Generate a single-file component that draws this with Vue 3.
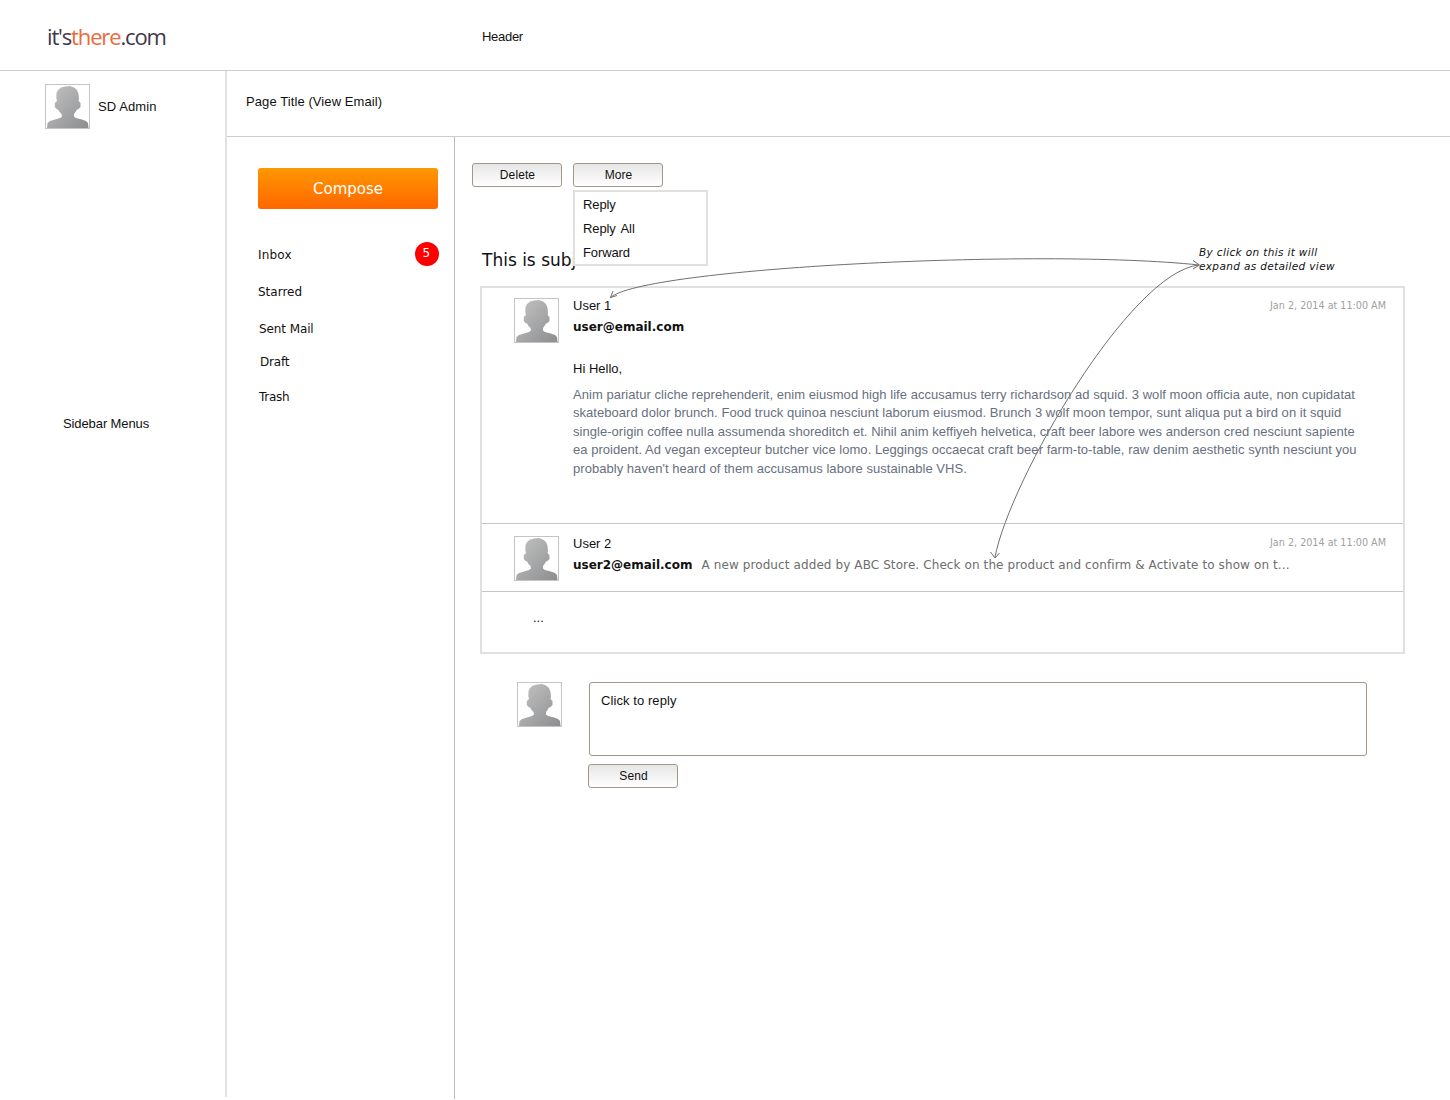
<template>
  <div class="page">
    <header class="top-bar">
      <div class="logo"><span class="logo-dark">it's</span><span class="logo-orange">there</span><span class="logo-dark">.com</span></div>
      <div class="header-label">Header</div>
    </header>

    <div class="body-row">
      <aside class="sidebar">
        <div class="profile">
          <svg class="avatar" viewBox="0 0 45 45"><use href="#person" /></svg>
          <span>SD Admin</span>
        </div>
        <div class="sidebar-label">Sidebar Menus</div>
      </aside>

      <main class="main">
        <div class="page-title">Page Title (View Email)</div>
        <div class="columns">
          <nav class="mail-nav">
            <button class="compose">Compose</button>
            <ul class="folders">
              <li v-for="f in folders" :key="f.name" :class="f.cls">
                <span class="folder-name">{{ f.name }}</span>
                <span v-if="f.count" class="count">{{ f.count }}</span>
              </li>
            </ul>
          </nav>

          <section class="content">
            <div class="actions">
              <button class="btn">Delete</button>
              <button class="btn">More</button>
              <ul class="menu">
                <li v-for="m in moreItems" :key="m">{{ m }}</li>
              </ul>
            </div>

            <h2 class="subject">This is subject</h2>

            <div class="thread">
              <article class="mail mail-open">
                <svg class="avatar" viewBox="0 0 45 45"><use href="#person" /></svg>
                <div class="mail-body">
                  <div class="user">User 1</div>
                  <div class="address">user@email.com</div>
                  <p class="greeting">Hi Hello,</p>
                  <p class="text">{{ bodyText }}</p>
                </div>
                <time class="date">Jan 2, 2014 at 11:00 AM</time>
              </article>
              <article class="mail mail-short">
                <svg class="avatar" viewBox="0 0 45 45"><use href="#person" /></svg>
                <div class="mail-body">
                  <div class="user">User 2</div>
                  <div class="address-row">
                    <span class="address">user2@email.com</span>
                    <span class="snippet">A new product added by ABC Store. Check on the product and confirm &amp; Activate to show on t...</span>
                  </div>
                </div>
                <time class="date">Jan 2, 2014 at 11:00 AM</time>
              </article>
              <div class="more-mails">...</div>
            </div>

            <div class="reply">
              <svg class="avatar" viewBox="0 0 45 45"><use href="#person" /></svg>
              <div class="reply-col">
                <div class="reply-box">Click to reply</div>
                <button class="btn send">Send</button>
              </div>
            </div>
          </section>
        </div>
      </main>
    </div>

    <!-- annotation arrows lie over the page -->
    <svg class="arrows" width="1450" height="1100" viewBox="0 0 1450 1100">
      <defs>
        <linearGradient id="personFill" x1="0" y1="0" x2="1" y2="1">
          <stop offset="0" stop-color="#c4c4c4" />
          <stop offset="1" stop-color="#8c8d8f" />
        </linearGradient>
        <symbol id="person" viewBox="0 0 45 45">
          <rect x="0.5" y="0.5" width="44" height="44" fill="#fff" stroke="#c4c4c4" />
          <path fill="url(#personFill)" d="M20 2.500L25 2L29 3.500L32 6L33.500 10L34 15L33.500 17L35.500 19L35.500 23L33.500 25L32 25.500L30.500 28L29 30L29 32.500L31 34L37 35.500L41 37L43 39L43.500 44L2 44L2.500 39L5 37L10 35.500L15 34L17 32.500L16.500 30L14.500 28L13 25.500L11.500 25L9.800 23L9.800 19L12 17L11.300 14L11.500 9L13 6L16 3.500Z" />
        </symbol>
      </defs>
      <g fill="none" stroke="#6f6f6f" stroke-width="1">
        <path d="M610 298C640 268 1040 248 1199 265" />
        <path d="M617 295.500L610.500 297.500L613 291" />
        <path d="M1199 265C1130 272 1010 480 995 557" />
        <path d="M990.500 552L995 558L999.500 553" />
        <path d="M1193 260.500L1199.500 265L1193 269" />
      </g>
    </svg>
    <div class="note">By click on this it will<br>expand as detailed view</div>
  </div>
</template>

<script setup>
const folders = [
  { name: 'Inbox', count: 5, cls: 'f-inbox' },
  { name: 'Starred', cls: 'f-starred' },
  { name: 'Sent Mail', cls: 'f-sent' },
  { name: 'Draft', cls: 'f-draft' },
  { name: 'Trash', cls: 'f-trash' }
]

const moreItems = ['Reply', 'Reply All', 'Forward']

const bodyText = "Anim pariatur cliche reprehenderit, enim eiusmod high life accusamus terry richardson ad squid. 3 wolf moon officia aute, non cupidatat skateboard dolor brunch. Food truck quinoa nesciunt laborum eiusmod. Brunch 3 wolf moon tempor, sunt aliqua put a bird on it squid single-origin coffee nulla assumenda shoreditch et. Nihil anim keffiyeh helvetica, craft beer labore wes anderson cred nesciunt sapiente ea proident. Ad vegan excepteur butcher vice lomo. Leggings occaecat craft beer farm-to-table, raw denim aesthetic synth nesciunt you probably haven't heard of them accusamus labore sustainable VHS."
</script>

<style>
body {
  background: #fff;
}
</style>

<style scoped>
.page {
  position: relative;
  width: 1450px;
  height: 1100px;
  overflow: hidden;
  font-family: "Liberation Sans", Arial, sans-serif;
  font-size: 13px;
  color: #111;
}

.top-bar {
  display: flex;
  align-items: center;
  height: 70px;
  border-bottom: 1px solid #ccc;
  padding-left: 47px;
}

.logo {
  width: 435px;
  font-family: "Open Sans", sans-serif;
  font-size: 22px;
  letter-spacing: -1.15px;
  line-height: 1;
  margin-top: 1px;
}

.logo-dark {
  color: #43364a;
}

.logo-orange {
  color: #ea6a3c;
}

.header-label {
  margin-top: 3px;
  letter-spacing: -0.3px;
}

.body-row {
  display: flex;
  align-items: flex-start;
  height: 1028px;
}

.sidebar {
  width: 225px;
  height: 1026px;
  flex: none;
  border-right: 2px solid #e2e2e2;
}

.profile {
  display: flex;
  align-items: center;
  gap: 8px;
  padding: 13px 0 0 45px;
  letter-spacing: 0.1px;
}

.avatar {
  display: block;
  width: 45px;
  height: 45px;
  flex: none;
}

.sidebar-label {
  margin: 287px 0 0 63px;
  letter-spacing: -0.1px;
}

.main {
  flex: 1;
  height: 100%;
  display: flex;
  flex-direction: column;
}

.page-title {
  height: 65px;
  line-height: 61px;
  padding-left: 19px;
  border-bottom: 1px solid #ccc;
  letter-spacing: 0.09px;
}

.columns {
  flex: 1;
  display: flex;
}

.mail-nav {
  width: 228px;
  flex: none;
  border-right: 1px solid #bbb;
  padding: 31px 15px 0 31px;
  box-sizing: border-box;
}

.compose {
  display: block;
  width: 180px;
  height: 41px;
  border: 0;
  border-radius: 3px;
  background: linear-gradient(#ff9800, #ff6600);
  color: #fff;
  font-family: "DejaVu Sans", sans-serif;
  font-size: 15px;
}

.folders {
  list-style: none;
  margin: 0;
  padding: 0;
  font-family: "DejaVu Sans", sans-serif;
  font-size: 12px;
}

.folders li {
  display: flex;
  justify-content: space-between;
  align-items: center;
  height: 24px;
}

.folder-name {
  padding-top: 2px;
}

.f-inbox {
  margin-top: 33px;
  letter-spacing: 0.2px;
}

.f-starred {
  margin-top: 13px;
}

.f-sent {
  margin: 13px 0 0 1px;
  letter-spacing: -0.1px;
}

.f-draft {
  margin: 9px 0 0 2px;
  letter-spacing: -0.2px;
}

.f-trash {
  margin: 11px 0 0 1px;
  letter-spacing: -0.3px;
}

.count {
  width: 24px;
  height: 24px;
  box-sizing: border-box;
  padding-right: 1px;
  border-radius: 50%;
  background: #f00;
  color: #fff;
  text-align: center;
  line-height: 23px;
}

.content {
  flex: 1;
  padding: 26px 45px 0 25px;
  min-width: 0;
}

.actions {
  position: relative;
  display: flex;
  gap: 11px;
  margin-left: -8px;
}

.btn {
  width: 90px;
  height: 24px;
  box-sizing: border-box;
  padding: 0 0 0 1px;
  border: 1px solid #a39887;
  border-radius: 3px;
  background: linear-gradient(#e6e6e6, #fff);
  font-family: "Liberation Sans", Arial, sans-serif;
  font-size: 12px;
  letter-spacing: 0.1px;
  color: #111;
}

.menu {
  position: absolute;
  z-index: 2;
  left: 101px;
  top: 27px;
  width: 135px;
  height: 76px;
  box-sizing: border-box;
  margin: 0;
  padding: 1px 0 0 8px;
  list-style: none;
  background: #fff;
  border: 2px solid #e0e0e0;
  letter-spacing: -0.1px;
  word-spacing: 2px;
}

.menu li {
  height: 24px;
  line-height: 24px;
}

.subject {
  margin: 62px 0 0 2px;
  height: 37px;
  font-family: "DejaVu Sans", sans-serif;
  font-size: 17px;
  font-weight: 400;
  line-height: 22px;
}

.thread {
  height: 368px;
  box-sizing: border-box;
  border: 2px solid #e0e0e0;
  width: 925px;
}

.mail {
  position: relative;
  display: flex;
  gap: 14px;
  padding-left: 32px;
  box-sizing: border-box;
  border-bottom: 1px solid #c4c4c4;
}

.mail-open {
  height: 236px;
  padding-top: 10px;
}

.mail-short {
  height: 68px;
  padding-top: 12px;
}

.mail-body {
  flex: 1;
  min-width: 0;
  padding-right: 37px;
}

.user {
  line-height: 16px;
}

.address {
  font-family: "DejaVu Sans", sans-serif;
  font-size: 12px;
  font-weight: 700;
  line-height: 15px;
  margin-top: 6px;
}

.address-row {
  display: flex;
  align-items: baseline;
  gap: 9px;
  margin-top: 5px;
  line-height: 16px;
  white-space: nowrap;
}

.address-row .address {
  margin-top: 0;
}

.snippet {
  font-family: "DejaVu Sans", sans-serif;
  font-size: 12px;
  letter-spacing: 0.1px;
  color: #6d6d6d;
}

.greeting {
  margin: 26px 0 0;
  line-height: 16px;
}

.text {
  margin: 8.7px 0 0;
  color: #687080;
  font-size: 13px;
  letter-spacing: 0.04px;
  line-height: 18.5px;
}

.date {
  position: absolute;
  right: 17px;
  top: 11px;
  font-family: "DejaVu Sans Condensed", "DejaVu Sans", sans-serif;
  font-size: 10.7px;
  color: #a0a0a0;
}

.mail-short .date {
  top: 12px;
}

.more-mails {
  padding: 18px 0 0 51px;
  line-height: 16px;
}

.reply {
  display: flex;
  margin: 28px 0 0 37px;
  gap: 27px;
}

.reply-col {
  display: flex;
  flex-direction: column;
  align-items: flex-start;
  gap: 8px;
}

.reply-box {
  width: 778px;
  height: 74px;
  box-sizing: border-box;
  padding: 10px 11px;
  border: 1px solid #a39887;
  border-radius: 3px;
  letter-spacing: 0.08px;
}

.send {
  margin-left: -1px;
}

.arrows {
  position: absolute;
  inset: 0;
  z-index: 3;
  pointer-events: none;
}

.note {
  position: absolute;
  z-index: 3;
  left: 1199px;
  top: 245px;
  font-family: "DejaVu Sans", sans-serif;
  font-size: 10.5px;
  font-style: italic;
  line-height: 14px;
  letter-spacing: 0.35px;
}
</style>
